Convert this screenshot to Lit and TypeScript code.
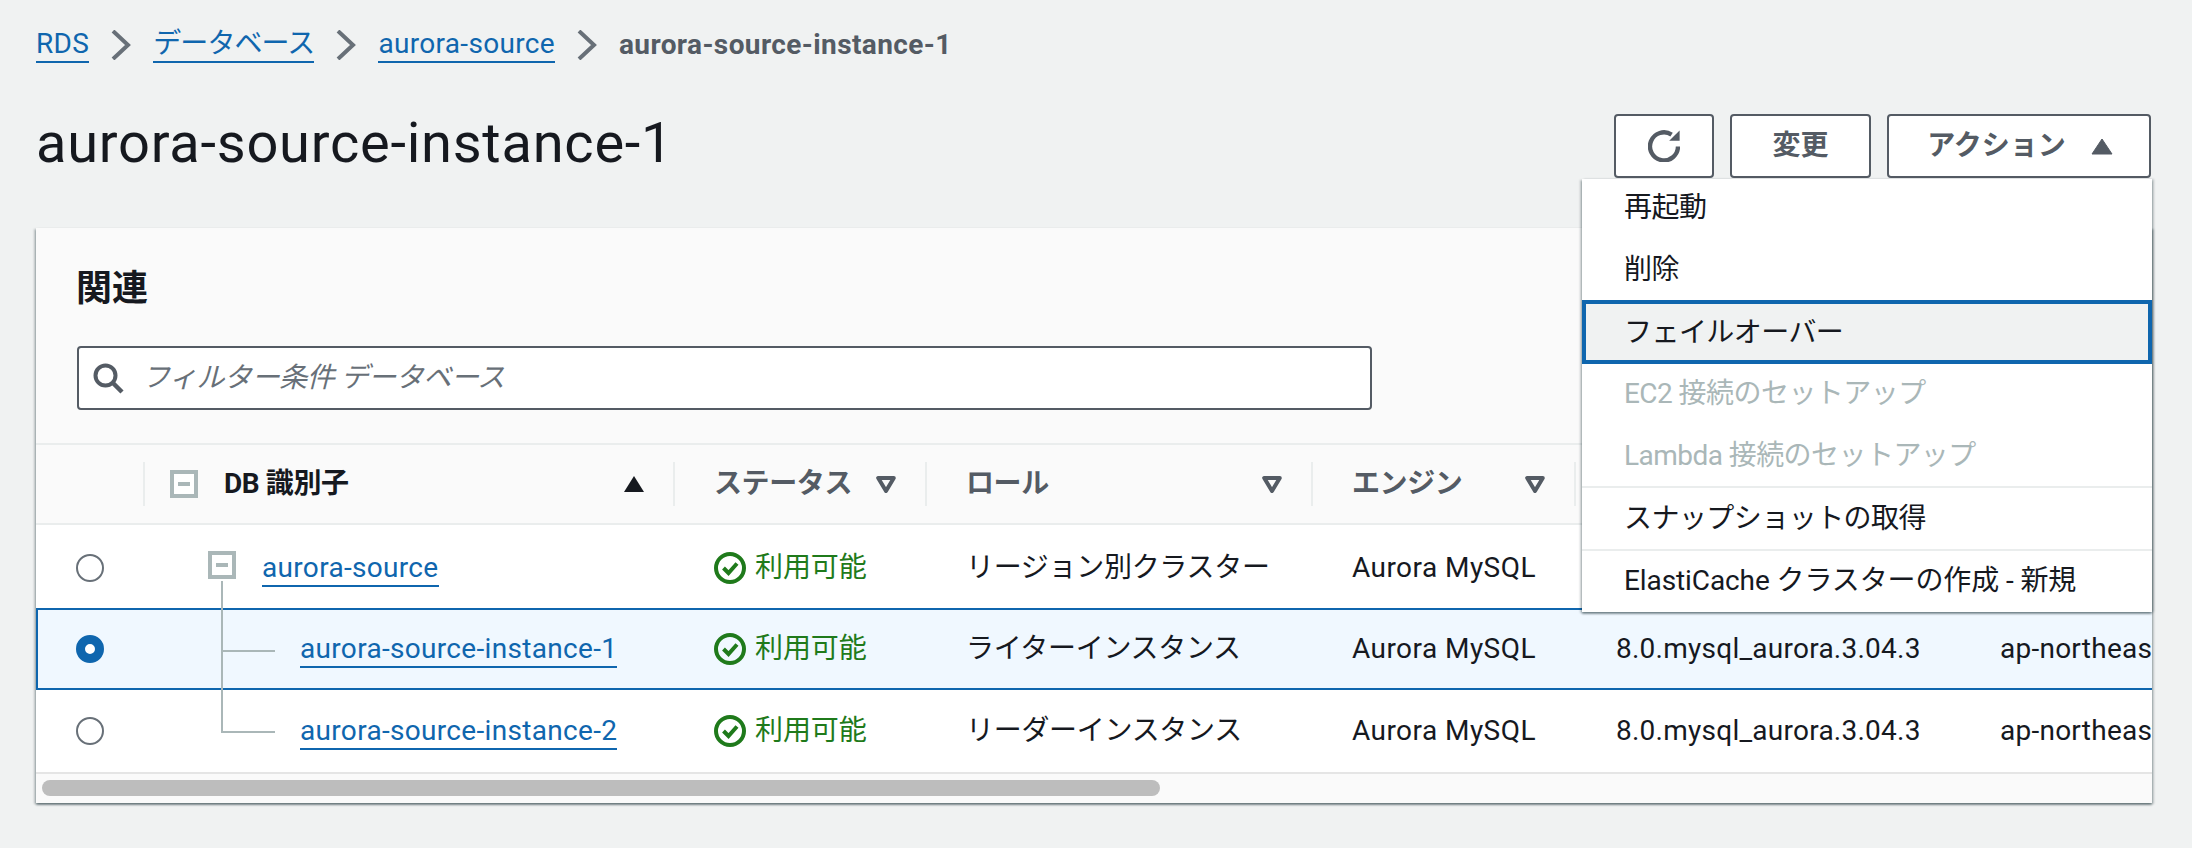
import { LitElement, css, html, nothing } from 'lit';
import { customElement } from 'lit/decorators.js';

const FONT = css`Roboto, 'Noto Sans CJK JP', sans-serif`;

type Row = {
  name: string;
  role: string;
  version: string;
  child: boolean;
  last?: boolean;
  selected?: boolean;
};

const ROWS: Row[] = [
  { name: 'aurora-source', role: 'リージョン別クラスター', version: '', child: false },
  { name: 'aurora-source-instance-1', role: 'ライターインスタンス', version: '8.0.mysql_aurora.3.04.3', child: true, selected: true },
  { name: 'aurora-source-instance-2', role: 'リーダーインスタンス', version: '8.0.mysql_aurora.3.04.3', child: true, last: true },
];

const COLUMNS = [
  { label: 'ステータス', sort: 'filter' },
  { label: 'ロール', sort: 'filter' },
  { label: 'エンジン', sort: 'filter' },
  { label: 'エンジンバージョン', sort: '' },
  { label: 'リージョン', sort: '' },
];

@customElement('app-root')
export class AppRoot extends LitElement {
  static styles = css`
    :host {
      display: block;
      min-height: 848px;
      padding: 0 40px 0 36px;
      background: #f0f2f2;
      color: #16191f;
      font-family: ${FONT};
      font-size: 28px;
      line-height: 40px;
      overflow: hidden;
      box-sizing: border-box;
    }

    a {
      display: inline-block;
      color: #0f66ae;
      text-decoration: none;
      letter-spacing: 0.32px;
      line-height: 34px;
      border-bottom: 2px solid #0f66ae;
    }

    .breadcrumbs {
      display: flex;
      align-items: center;
      height: 40px;
      padding-top: 25px;
      gap: 22px;
    }
    .breadcrumbs a.kana { letter-spacing: -0.9px; }
    .breadcrumbs .current {
      color: #545b64;
      font-weight: 700;
      letter-spacing: 0.4px;
    }
    .chevron { width: 20px; height: 30px; flex: none; }

    .head {
      display: flex;
      justify-content: space-between;
      align-items: flex-start;
      padding-top: 49px;
      height: 163px;
      box-sizing: border-box;
    }
    h1 {
      margin: 0;
      font-size: 56px;
      line-height: 68px;
      font-weight: 400;
      letter-spacing: 0.75px;
      margin-top: -5px;
    }
    .actions {
      position: relative;
      display: flex;
      gap: 16px;
      margin-right: 1px;
    }
    button {
      height: 64px;
      box-sizing: border-box;
      border: 2px solid #545b64;
      border-radius: 4px;
      background: #fff;
      color: #545b64;
      font: 700 28px/40px ${FONT};
      display: flex;
      align-items: center;
      justify-content: center;
      padding: 0;
    }
    .btn-refresh { width: 100px; padding-right: 1px; }
    .btn-edit { width: 141px; }
    .btn-action { width: 264px; gap: 25px; padding-left: 2px; }

    .menu {
      position: absolute;
      z-index: 5;
      top: 65px;
      right: -1px;
      width: 570px;
      height: 433px;
      background: #fff;
      box-shadow: 0 2px 2px rgba(0, 28, 36, 0.4), 2px 0 2px rgba(0, 28, 36, 0.2), -2px 1px 2px rgba(0, 28, 36, 0.2);
      box-sizing: border-box;
      overflow: hidden;
    }
    .menu-item {
      height: 62px;
      display: flex;
      align-items: center;
      padding: 2px 0 0 42px;
      box-sizing: border-box;
      letter-spacing: -0.55px;
    }
    .menu-item:first-child { margin-top: -3px; }
    .menu-item.focus {
      height: 64px;
      margin-bottom: -2px;
      background: #f0f2f2;
      border: 4px solid #0f66ae;
      padding-left: 38px;
    }
    .menu-item.disabled { color: #aab7b8; }
    .menu-item.sep { border-top: 2px solid #eaeded; height: 63px; padding-top: 0; }
    .menu-item.wide { letter-spacing: -0.1px; padding-bottom: 2px; }

    .card {
      background: #fff;
      box-shadow: 0 2px 2px rgba(0, 28, 36, 0.4), 2px 1px 2px rgba(0, 28, 36, 0.2), -2px 1px 2px rgba(0, 28, 36, 0.2);
      overflow: hidden;
    }
    .card-head {
      background: #fafafa;
      padding: 38px 41px 33px;
    }
    h2 {
      margin: 0 0 34px -1px;
      font-size: 36px;
      line-height: 46px;
      font-weight: 700;
    }
    .filter {
      width: 1295px;
      height: 64px;
      box-sizing: border-box;
      background: #fff;
      border: 2px solid #545b64;
      border-radius: 4px;
      display: flex;
      align-items: center;
      padding-left: 13px;
      gap: 18px;
      color: #687078;
      font-style: italic;
      letter-spacing: -0.45px;
    }
    .filter svg { flex: none; }

    .grid {
      display: grid;
      grid-template-columns: 107px 530px 252px 386px 263px 384px 400px;
      width: 2322px;
    }
    .th, .td {
      display: flex;
      align-items: center;
      box-sizing: border-box;
      padding-left: 41px;
      min-width: 0;
      white-space: nowrap;
    }
    .th {
      position: relative;
      height: 82px;
      background: #fafafa;
      border-top: 2px solid #eaeded;
      border-bottom: 2px solid #eaeded;
      font-weight: 700;
      color: #545b64;
      justify-content: space-between;
      padding-right: 29px;
      letter-spacing: -0.4px;
    }
    .th::before {
      content: '';
      position: absolute;
      left: 0;
      top: 17px;
      bottom: 17px;
      width: 2px;
      background: #eaeded;
    }
    .th.first::before { display: none; }
    .th.id { color: #16191f; padding-left: 27px; gap: 26px; justify-content: flex-start; }
    .th.id svg:last-child { margin-left: auto; }
    .th-box { flex: none; }

    .td {
      height: 82px;
      letter-spacing: -0.3px;
    }
    .td.engine { letter-spacing: 0.45px; }
    .td.latin { letter-spacing: 0.25px; padding-left: 42px; }
    .td.radio-cell { padding-left: 40px; }
    .row-first .td { height: 83px; padding-top: 3px; }
    .row-selected .td {
      background: #f0f8ff;
      border-top: 2px solid #0f66ae;
      border-bottom: 2px solid #0f66ae;
    }
    .row-selected .td.radio-cell { border-left: 2px solid #0f66ae; padding-left: 38px; }
    .row { display: contents; }

    .radio {
      width: 28px;
      height: 28px;
      box-sizing: border-box;
      border-radius: 50%;
      border: 2px solid #687078;
      background: #fff;
    }
    .radio.on { border: 9px solid #0f66ae; }

    .tree { position: relative; padding-left: 65px; gap: 26px; }
    .tree.child { padding-left: 157px; }
    .tree-box {
      width: 28px;
      height: 28px;
      flex: none;
      margin-top: -6px;
    }
    .tree-line {
      position: absolute;
      left: 78px;
      width: 2px;
      background: #aab7b8;
      z-index: 1;
    }
    .tree-line.parent { top: 56px; bottom: -2px; }
    .tree-line.mid { top: -2px; bottom: -2px; }
    .tree-line.end { top: -2px; height: 44px; }
    .tree-branch {
      position: absolute;
      left: 78px;
      top: 40px;
      width: 54px;
      height: 2px;
      background: #aab7b8;
    }
    .tree-line.end + .tree-branch { top: 41px; }
    .tree a { margin-top: 2px; }

    .status { color: #1f7a1b; gap: 9px; letter-spacing: -0.1px; }
    .status svg { flex: none; }

    .scroll {
      height: 31px;
      background: #fafafa;
      border-top: 2px solid #e5e5e5;
      box-sizing: border-box;
      padding: 6px 6px 0;
    }
    .thumb {
      width: 1118px;
      height: 16px;
      border-radius: 8px;
      background: #bdbdbd;
    }
  `;

  private sortUp() {
    return html`<svg width="20" height="16" viewBox="0 0 20 16"><path d="M10 0 L20 16 H0 Z" fill="#16191f"/></svg>`;
  }

  private filterDown() {
    return html`<svg width="20" height="17" viewBox="0 0 20 17" style="flex:none"><path d="M2.2 2 H17.8 L10 15 Z" fill="none" stroke="#545b64" stroke-width="4" stroke-linejoin="round"/></svg>`;
  }

  private chevron() {
    return html`<svg class="chevron" viewBox="0 0 20 30"><path d="M2 1 L17 15 L2 29" fill="none" stroke="#687078" stroke-width="4"/></svg>`;
  }

  private treeBox(cls: string) {
    return html`<svg class=${cls} width="28" height="28" viewBox="0 0 28 28"><rect x="2" y="2" width="24" height="24" fill="#fff" stroke="#aab7b8" stroke-width="4"/><rect x="8" y="12" width="12" height="4" fill="#aab7b8"/></svg>`;
  }

  private statusIcon() {
    return html`<svg width="32" height="32" viewBox="0 0 32 32"><circle cx="16" cy="16" r="14" fill="none" stroke="#1f7a1b" stroke-width="4"/><path d="M9.5 16 L14.5 21 L23 11.5" fill="none" stroke="#1f7a1b" stroke-width="4"/></svg>`;
  }

  private renderRow(r: Row, i: number) {
    const cls = `row ${r.selected ? 'row-selected' : ''} ${i === 0 ? 'row-first' : ''}`;
    return html`<div class=${cls}>
      <div class="td radio-cell"><div class="radio ${r.selected ? 'on' : ''}"></div></div>
      <div class="td tree ${r.child ? 'child' : ''}">
        ${r.child
          ? html`<span class="tree-line ${r.last ? 'end' : 'mid'}"></span><span class="tree-branch"></span>`
          : html`<span class="tree-line parent"></span>${this.treeBox('tree-box')}`}
        <a href="#">${r.name}</a>
      </div>
      <div class="td status">${this.statusIcon()}利用可能</div>
      <div class="td">${r.role}</div>
      <div class="td engine">Aurora MySQL</div>
      <div class="td latin">${r.version || nothing}</div>
      <div class="td latin">ap-northeast-1</div>
    </div>`;
  }

  render() {
    return html`
      <nav class="breadcrumbs">
        <a href="#">RDS</a>
        ${this.chevron()}
        <a class="kana" href="#">データベース</a>
        ${this.chevron()}
        <a href="#">aurora-source</a>
        ${this.chevron()}
        <span class="current">aurora-source-instance-1</span>
      </nav>

      <div class="head">
        <h1>aurora-source-instance-1</h1>
        <div class="actions">
          <button class="btn-refresh" aria-label="refresh">
            <svg width="32" height="32" viewBox="0 0 16 16">
              <path d="M15 8.2a7 7 0 1 1-3.2-5.9" fill="none" stroke="#545b64" stroke-width="2.2"/>
              <path d="M15.8 0.2V5.4H10.6Z" fill="#545b64"/>
            </svg>
          </button>
          <button class="btn-edit">変更</button>
          <button class="btn-action">
            アクション
            <svg width="22" height="17" viewBox="0 0 22 17"><path d="M11 1 L21 16 H1 Z" fill="#545b64" stroke="#545b64" stroke-linejoin="round"/></svg>
          </button>
          <div class="menu">
            <div class="menu-item">再起動</div>
            <div class="menu-item">削除</div>
            <div class="menu-item focus">フェイルオーバー</div>
            <div class="menu-item disabled">EC2 接続のセットアップ</div>
            <div class="menu-item disabled">Lambda 接続のセットアップ</div>
            <div class="menu-item sep">スナップショットの取得</div>
            <div class="menu-item sep wide">ElastiCache クラスターの作成 - 新規</div>
          </div>
        </div>
      </div>

      <section class="card">
        <div class="card-head">
          <h2>関連</h2>
          <div class="filter">
            <svg width="32" height="32" viewBox="0 0 32 32">
              <circle cx="13.5" cy="13.5" r="10" fill="none" stroke="#545b64" stroke-width="4"/>
              <path d="M21 21 L30 30" stroke="#545b64" stroke-width="4.5"/>
            </svg>
            <span>フィルター条件 データベース</span>
          </div>
        </div>

        <div class="grid">
          <div class="th first"></div>
          <div class="th id">
            ${this.treeBox('th-box')}
            <span>DB 識別子</span>
            ${this.sortUp()}
          </div>
          ${COLUMNS.map(c => html`<div class="th"><span>${c.label}</span>${c.sort ? this.filterDown() : nothing}</div>`)}
          ${ROWS.map((r, i) => this.renderRow(r, i))}
        </div>

        <div class="scroll"><div class="thumb"></div></div>
      </section>
    `;
  }
}
